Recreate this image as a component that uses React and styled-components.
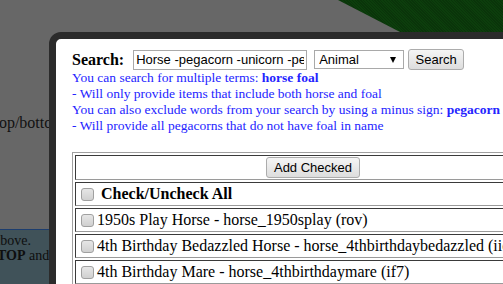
import styled, { createGlobalStyle } from "styled-components";

const GlobalStyle = createGlobalStyle`
  html, body {
    margin: 0;
    padding: 0;
    width: 503px;
    height: 284px;
    overflow: hidden;
    background: #676767;
  }
`;

const Page = styled.div`
  position: relative;
  width: 503px;
  height: 284px;
  overflow: hidden;
  display: flex;
  flex-direction: column;
  background: #676767;
  font-family: "Liberation Serif", serif;
  color: #111;
`;

const Header = styled.div`
  height: 32px;
  flex-shrink: 0;
  position: relative;
  /* the dimmed green banner, cut on a diagonal */
  &::after {
    content: "";
    position: absolute;
    inset: 0;
    background: repeating-linear-gradient(
      45deg,
      #0c3e0c 0px,
      #0c3e0c 1px,
      #0a340a 1px,
      #0a340a 2px
    );
    clip-path: polygon(338px 0, 100% 0, 100% 100%, 400px 100%);
  }
`;

const BackText = styled.p`
  margin: 83px 0 0 -22px;
  font-size: 16px;
  line-height: 16px;
  white-space: nowrap;
`;

const InfoBox = styled.div`
  margin-top: 98px;
  flex: 1;
  background: #405259;
  border-top: 1px solid #1c3d6e;
  padding-top: 3px;
  font-size: 14px;
  line-height: 15px;
  color: #0e0e0e;
`;

const InfoLine = styled.div`
  white-space: nowrap;
  margin-left: ${(p) => p.$offset}px;
`;

const Modal = styled.div`
  position: absolute;
  left: 49px;
  top: 32px;
  width: 540px;
  height: 300px;
  box-sizing: border-box;
  border: 7px solid #2b2b2b;
  border-radius: 12px;
  background: #fff;
  padding: 10px 16px;
  white-space: nowrap;
`;

const SearchRow = styled.div`
  display: flex;
  align-items: center;
  height: 21px;
`;

const Label = styled.label`
  font-family: "Liberation Serif", serif;
  font-weight: bold;
  font-size: 16px;
  color: #000;
  margin-right: 9px;
`;

const TextInput = styled.input`
  box-sizing: border-box;
  width: 174px;
  height: 20px;
  border: 1px solid #a9a9a9;
  padding: 1px 2px;
  font-family: "Liberation Sans", Arial, sans-serif;
  font-size: 13px;
  color: #000;
  outline: none;
`;

const SelectWrap = styled.div`
  position: relative;
  margin-left: 7px;
  &::after {
    content: "";
    position: absolute;
    right: 8px;
    top: 7px;
    border-left: 3px solid transparent;
    border-right: 3px solid transparent;
    border-top: 6px solid #000;
    pointer-events: none;
  }
`;

const Select = styled.select`
  appearance: none;
  box-sizing: border-box;
  width: 90px;
  height: 19px;
  border: 1px solid #a9a9a9;
  border-radius: 0;
  background: #fff;
  padding: 0 0 0 4px;
  font-family: "Liberation Sans", Arial, sans-serif;
  font-size: 13px;
  color: #000;
  display: block;
`;

const Button = styled.button`
  box-sizing: border-box;
  height: ${(p) => p.$h || 21}px;
  width: ${(p) => p.$w}px;
  margin-left: ${(p) => p.$ml || 0}px;
  border: 1px solid #acacac;
  border-radius: 3px;
  background: linear-gradient(#f5f5f5, #dddddd);
  font-family: "Liberation Sans", Arial, sans-serif;
  font-size: 13px;
  color: #000;
  padding: 0;
`;

const Help = styled.div`
  font-family: "Liberation Serif", serif;
  font-size: 13.5px;
  line-height: 16px;
  color: #2424ff;
  b {
    font-weight: bold;
  }
`;

const Table = styled.table`
  margin-top: 18px;
  width: 482px;
  border-collapse: separate;
  border-spacing: 2px;
  border: 1px solid;
  border-color: #a0a0a0 #6f6f6f #6f6f6f #a0a0a0;
  font-family: "Liberation Serif", serif;
  font-size: 16px;
  color: #000;
`;

const Cell = styled.td`
  border: 1px solid;
  border-color: #3a3a3a #9a9a9a #9a9a9a #3a3a3a;
  padding: 1px;
  height: 20px;
  line-height: 20px;
  text-align: ${(p) => (p.$center ? "center" : "left")};
  font-weight: ${(p) => (p.$bold ? "bold" : "normal")};
  white-space: nowrap;
  overflow: hidden;
  vertical-align: middle;
`;

const Check = styled.input.attrs({ type: "checkbox" })`
  appearance: none;
  box-sizing: border-box;
  width: 13px;
  height: 13px;
  margin: 0 3px 0 4px;
  border: 1px solid #a0a0a0;
  border-radius: 3px;
  background: linear-gradient(#e6e6e6, #d0d0d0);
  vertical-align: -2px;
`;

const ButtonCell = styled(Cell)`
  height: 21px;
  line-height: 21px;
  button {
    display: block;
    margin: 0 auto;
  }
`;

const items = [
  "1950s Play Horse - horse_1950splay (rov)",
  "4th Birthday Bedazzled Horse - horse_4thbirthdaybedazzled (iid)",
  "4th Birthday Mare - horse_4thbirthdaymare (if7)",
];

export default function App() {
  return (
    <>
      <GlobalStyle />
      <Page>
        <Header />
        <BackText>to top/bottom of the page</BackText>
        <InfoBox>
          <InfoLine $offset={-6}>above.</InfoLine>
          <InfoLine $offset={-3}>
            <b>TOP</b> and
          </InfoLine>
        </InfoBox>

        <Modal>
          <SearchRow>
            <Label>Search:</Label>
            <TextInput defaultValue="Horse -pegacorn -unicorn -pegasus" />
            <SelectWrap>
              <Select defaultValue="Animal">
                <option>Animal</option>
              </Select>
            </SelectWrap>
            <Button $w={56} $ml={4}>Search</Button>
          </SearchRow>
          <Help>
            <div>
              You can search for multiple terms: <b>horse foal</b>
            </div>
            <div>- Will only provide items that include both horse and foal</div>
            <div>
              You can also exclude words from your search by using a minus
              sign: <b>pegacorn -foal</b>
            </div>
            <div>- Will provide all pegacorns that do not have foal in name</div>
          </Help>
          <Table>
            <tbody>
              <tr>
                <ButtonCell $center>
                  <Button $w={94}>Add Checked</Button>
                </ButtonCell>
              </tr>
              <tr>
                <Cell $bold>
                  <Check /> Check/Uncheck All
                </Cell>
              </tr>
              {items.map((item) => (
                <tr key={item}>
                  <Cell>
                    <Check />
                    {item}
                  </Cell>
                </tr>
              ))}
            </tbody>
          </Table>
        </Modal>
      </Page>
    </>
  );
}
